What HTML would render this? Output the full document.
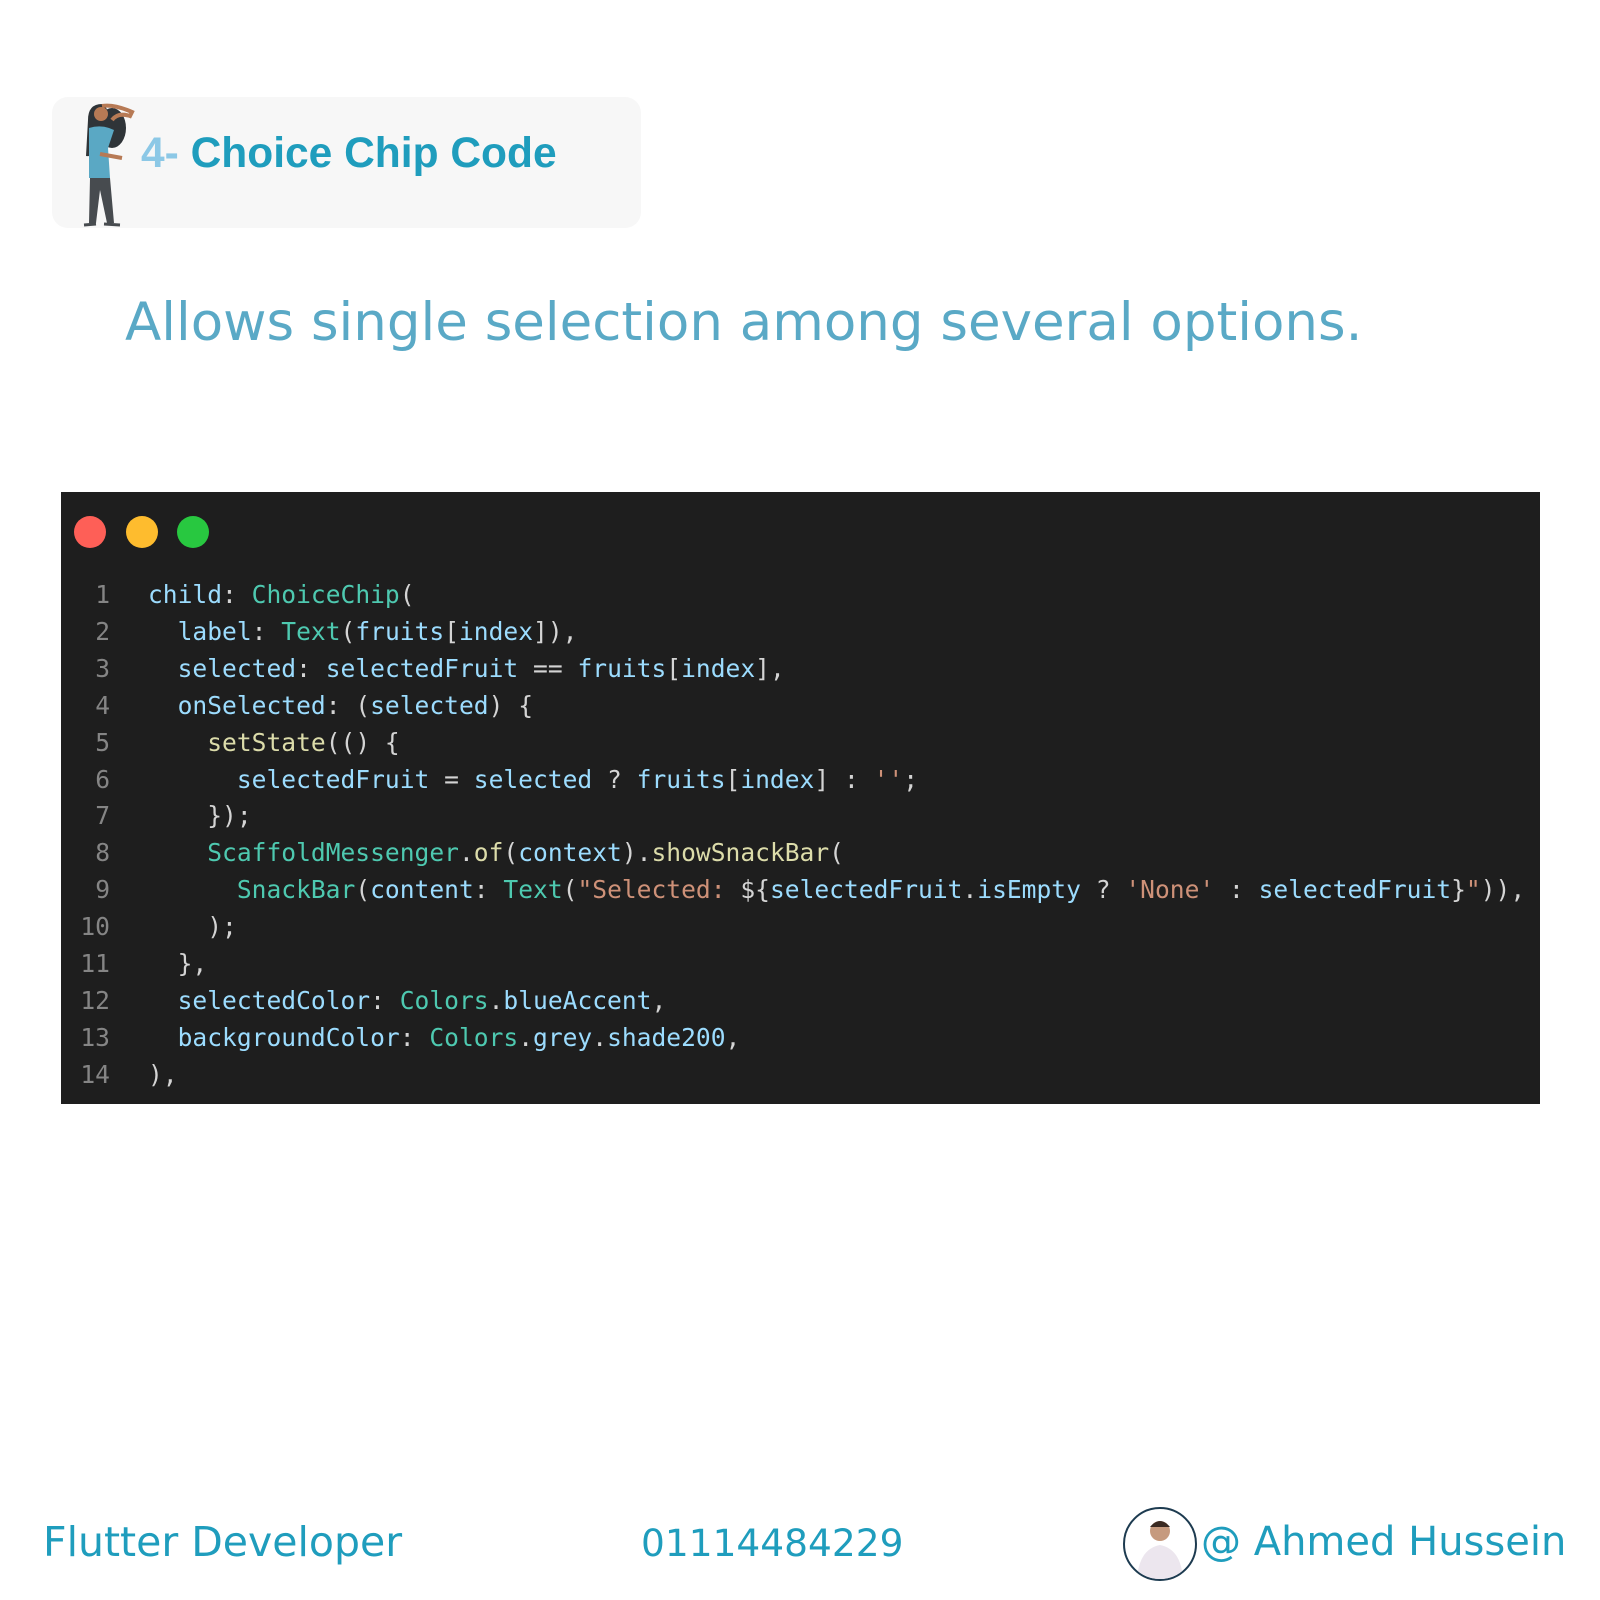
<!DOCTYPE html>
<html><head><meta charset="utf-8"><style>
body{margin:0;width:1600px;height:1600px;background:#fff;position:relative;overflow:hidden;font-family:"DejaVu Sans","Liberation Sans",sans-serif}
.hdr{position:absolute;left:52px;top:97px;width:589px;height:131px;background:#f7f7f7;border-radius:16px}
.title{position:absolute;left:141px;top:130px;font-family:"Liberation Sans",sans-serif;font-size:42.5px;font-weight:bold;color:#1f9dbd;white-space:nowrap}
.title span{color:#8cc8e6}
.sub{position:absolute;left:125px;top:292px;font-size:53px;color:#5aa9c6;white-space:nowrap}
.code{position:absolute;left:61px;top:492px;width:1479px;height:612px;background:#1e1e1e}
.dot{position:absolute;top:516px;width:32px;height:32px;border-radius:50%}
pre{position:absolute;left:0;top:0;margin:0;font-family:"DejaVu Sans Mono","Liberation Mono",monospace;font-size:24.6px;line-height:36.9px;color:#d4d4d4}
.ln{position:absolute;left:70px;top:577px;text-align:right;width:40px;color:#858585}
.src{position:absolute;left:148px;top:577px;white-space:pre}
.k{color:#9cdcfe}.c{color:#4ec9b0}.f{color:#dcdcaa}.s{color:#ce9178}
.ft{position:absolute;top:1518px;font-size:41px;color:#1f9dbd;white-space:nowrap}
.av{position:absolute;left:1123px;top:1507px;width:70px;height:70px;border-radius:50%;border:2px solid #1d3b50;background:#fff;overflow:hidden}
</style></head><body>
<div class="hdr"></div>
<svg style="position:absolute;left:74px;top:98px" width="70" height="130" viewBox="0 0 70 130">
<ellipse cx="38" cy="30" rx="14" ry="20" fill="#2f3438"/>
<path d="M14 22 Q14 6 28 6 Q34 8 34 20 L34 40 Q24 60 12 58 Z" fill="#2f3438"/>
<circle cx="27" cy="16" r="7" fill="#b77a55"/>
<path d="M28 8 Q40 6 58 14 L56 18 Q44 14 38 22" stroke="#b77a55" stroke-width="4" fill="none"/>
<path d="M15 30 Q28 26 40 32 L34 50 L36 80 L15 80 Z" fill="#5aa8c4"/>
<path d="M26 56 L48 60" stroke="#b77a55" stroke-width="4"/>
<path d="M16 80 L36 80 L40 125 L33 125 L26 92 L22 125 L15 125 Z" fill="#474b4f"/>
<path d="M10 127 L22 126 M30 126 L46 127" stroke="#474b4f" stroke-width="3"/>
</svg>
<div class="title"><span>4-</span> Choice Chip Code</div>
<div class="sub">Allows single selection among several options.</div>
<div class="code"></div>
<div class="dot" style="left:74px;background:#fe5f57"></div>
<div class="dot" style="left:126px;background:#febc2e"></div>
<div class="dot" style="left:177px;background:#28c840"></div>
<pre class="ln">1
2
3
4
5
6
7
8
9
10
11
12
13
14</pre>
<pre class="src"><span class="k">child</span>: <span class="c">ChoiceChip</span>(
  <span class="k">label</span>: <span class="c">Text</span>(<span class="k">fruits</span>[<span class="k">index</span>]),
  <span class="k">selected</span>: <span class="k">selectedFruit</span> == <span class="k">fruits</span>[<span class="k">index</span>],
  <span class="k">onSelected</span>: (<span class="k">selected</span>) {
    <span class="f">setState</span>(() {
      <span class="k">selectedFruit</span> = <span class="k">selected</span> ? <span class="k">fruits</span>[<span class="k">index</span>] : <span class="s">''</span>;
    });
    <span class="c">ScaffoldMessenger</span>.<span class="f">of</span>(<span class="k">context</span>).<span class="f">showSnackBar</span>(
      <span class="c">SnackBar</span>(<span class="k">content</span>: <span class="c">Text</span>(<span class="s">"Selected: </span>${<span class="k">selectedFruit</span>.<span class="k">isEmpty</span> ? <span class="s">'None'</span> : <span class="k">selectedFruit</span>}<span class="s">"</span>)),
    );
  },
  <span class="k">selectedColor</span>: <span class="c">Colors</span>.<span class="k">blueAccent</span>,
  <span class="k">backgroundColor</span>: <span class="c">Colors</span>.<span class="k">grey</span>.<span class="k">shade200</span>,
),</pre>
<div class="ft" style="left:43px">Flutter Developer</div>
<div class="ft" style="left:641px;font-size:37.5px;top:1521px">01114484229</div>
<div class="av"><svg width="70" height="70" viewBox="0 0 70 70"><path d="M12 70 Q14 40 35 36 Q56 40 58 70 Z" fill="#ece6ee"/><circle cx="35" cy="22" r="10" fill="#c69a7e"/><path d="M25 18 Q35 6 45 18" fill="#3a2a22"/></svg></div>
<div class="ft" style="left:1201px;font-size:40px;top:1519px">@ Ahmed Hussein</div>
</body></html>
